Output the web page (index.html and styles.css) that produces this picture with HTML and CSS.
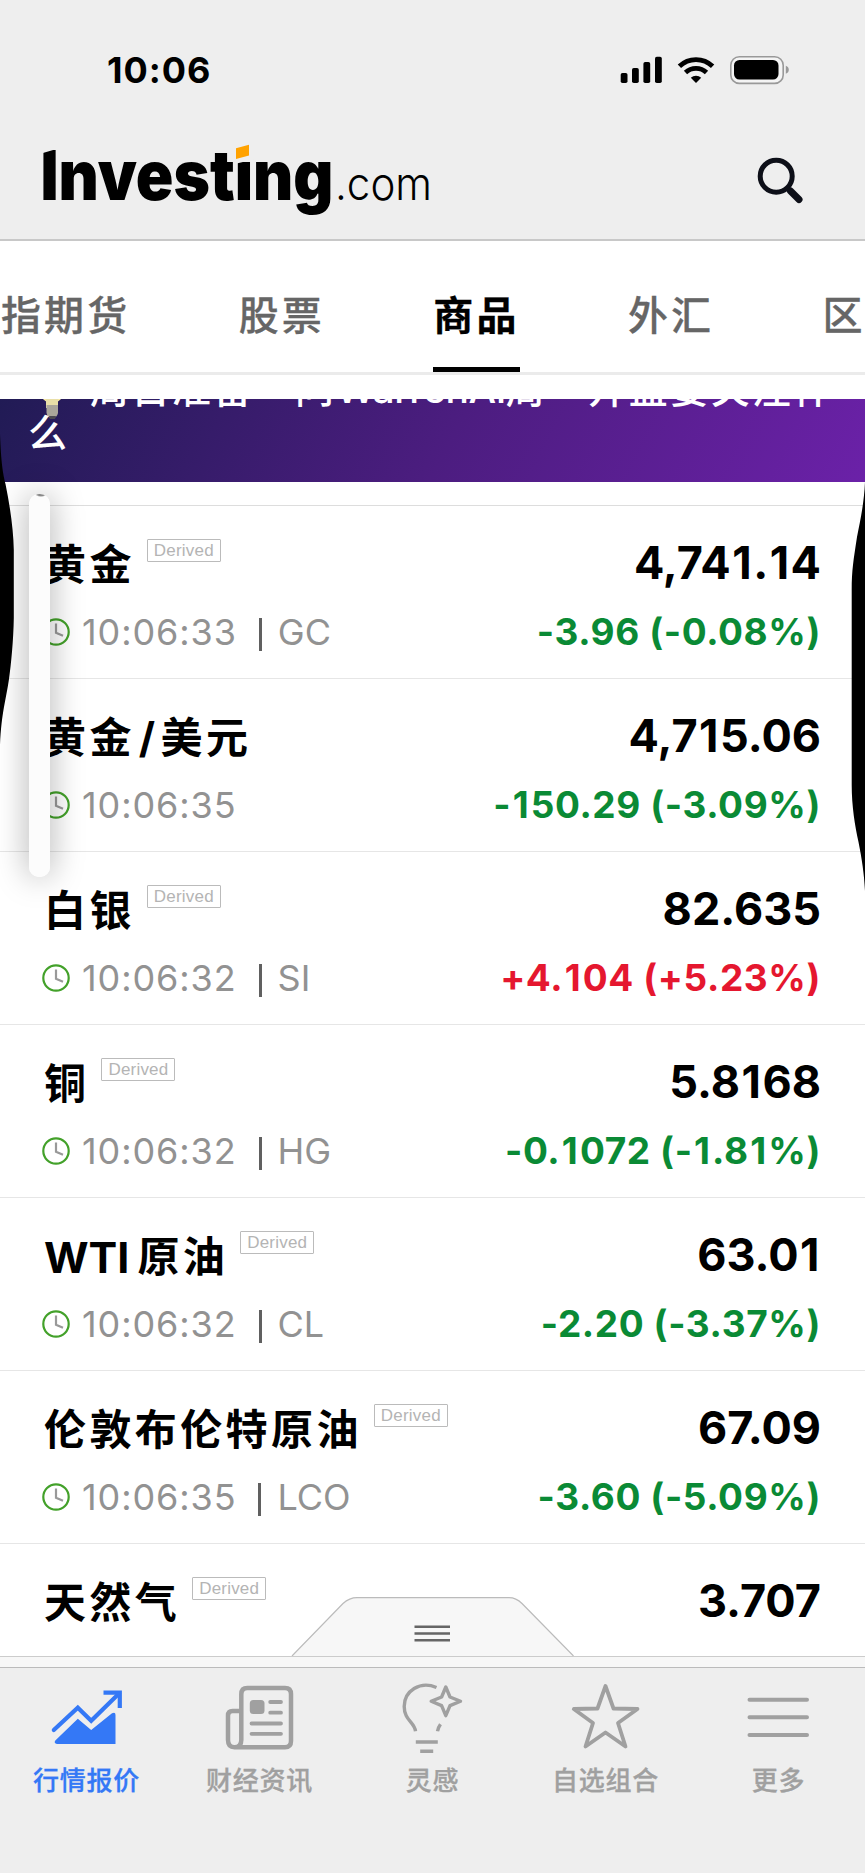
FILE: index.html
```html
<!DOCTYPE html>
<html lang="zh-CN">
<head>
  <meta charset="UTF-8">
  <meta name="viewport" content="width=device-width, initial-scale=1.0">
  <title>Investing.com</title>
  <link rel="stylesheet" href="styles.css">
</head>
<body>
  <div class="app">
    <header class="header">
      <div class="status-bar">
        <span class="status-time">10:06</span>
        <svg class="status-icons" width="170" height="30" viewBox="620 55 170 30">
          <rect x="620.7" y="73" width="6.8" height="10" rx="1.8"/>
          <rect x="632" y="68" width="6.8" height="15" rx="1.8"/>
          <rect x="643.4" y="62" width="6.8" height="21" rx="1.8"/>
          <rect x="655" y="56.7" width="6.8" height="26.3" rx="1.8"/>
          <g fill="none" stroke="#000" stroke-width="4.8">
            <path d="M679.4 66.2a24 24 0 0 1 33.2 0"/>
            <path d="M685.5 72.6a15.4 15.4 0 0 1 21 0"/>
          </g>
          <path d="M696 83l-5.2-5.2a7.6 7.6 0 0 1 10.4 0z"/>
          <rect x="730.8" y="56.8" width="52.4" height="26.6" rx="8.5" fill="#f4f4f4" stroke="#999" stroke-width="1.6"/>
          <rect x="734" y="60" width="44.5" height="19.6" rx="5.5"/>
          <path d="M785.8 65.8v8q3-1.2 3-4t-3-4z" fill="#999"/>
        </svg>
      </div>
      <div class="brand-bar">
        <svg class="logo" width="392" height="74" viewBox="40 140 392 74">
          <text class="logo-name" x="40.5" y="199.7" textLength="293" lengthAdjust="spacingAndGlyphs">Investing</text>
          <text class="logo-com" x="335" y="199.7" textLength="97" lengthAdjust="spacingAndGlyphs">.com</text>
          <path class="logo-cut" d="M40 138h20v10l-18 5.2h-2z"/>
          <path class="logo-cut" d="M234.500 138h19v21.500l-19 4.500z"/>
          <path class="logo-dot" d="M236 148.3l13-3.6v10.8l-13 3.4z"/>
        </svg>
        <svg class="search" width="48" height="52" viewBox="755 155 48 52">
          <circle cx="776.2" cy="176.2" r="16"/>
          <path class="search-neck" d="M786.5 187.5l3 3"/>
          <path class="search-handle" d="M790.5 191l8.5 8.5"/>
        </svg>
      </div>
    </header>

    <nav class="tabs">
      <a class="tab">指期货</a>
      <a class="tab">股票</a>
      <a class="tab active">商品</a>
      <a class="tab">外汇</a>
      <a class="tab">区</a>
    </nav>

    <main class="content">
      <div class="banner">
        <p class="banner-text"><svg class="bulb" width="50" height="40" viewBox="0 0 50 40"><circle cx="24" cy="12" r="12" fill="#f6e7a0"/><path d="M18 20h12v9H18z" fill="#e9dfa8"/><path d="M18.500 26h11.500v8q-1 5-5.700 5t-5.800-5z" fill="#aaa69b"/><path d="M21 37h7l-1 3h-5z" fill="#4c4a52"/></svg><span class="gap"></span>周日准备—问<span class="warren">WarrenAI</span>周一开盘要关注什<br>么</p>
      </div>

      <ul class="quotes">
        <li class="quote">
          <div class="name">黄金<span class="tag">Derived</span></div>
          <div class="price">4,74<i>1</i>.<i>1</i>4</div>
          <div class="meta"><svg class="clock" viewBox="0 0 28 28"><circle cx="14" cy="14" r="12.700"/><path d="M14 5.500v9.200l7 3"/></svg><span class="time">10:06:33</span><b class="sep"></b><span>GC</span></div>
          <div class="change down">-3.96 (-0.08%)</div>
        </li>
        <li class="quote">
          <div class="name">黄金<span class="slash">/</span>美元</div>
          <div class="price">4,7<i>1</i>5.06</div>
          <div class="meta"><svg class="clock" viewBox="0 0 28 28"><circle cx="14" cy="14" r="12.700"/><path d="M14 5.500v9.200l7 3"/></svg><span class="time">10:06:35</span></div>
          <div class="change down">-<i>1</i>50.29 (-3.09%)</div>
        </li>
        <li class="quote">
          <div class="name">白银<span class="tag">Derived</span></div>
          <div class="price">82.635</div>
          <div class="meta"><svg class="clock" viewBox="0 0 28 28"><circle cx="14" cy="14" r="12.700"/><path d="M14 5.500v9.200l7 3"/></svg><span class="time">10:06:32</span><b class="sep"></b><span>SI</span></div>
          <div class="change up">+4.<i>1</i>04 (+5.23%)</div>
        </li>
        <li class="quote">
          <div class="name">铜<span class="tag">Derived</span></div>
          <div class="price">5.8<i>1</i>68</div>
          <div class="meta"><svg class="clock" viewBox="0 0 28 28"><circle cx="14" cy="14" r="12.700"/><path d="M14 5.500v9.200l7 3"/></svg><span class="time">10:06:32</span><b class="sep"></b><span>HG</span></div>
          <div class="change down">-0.<i>1</i>072 (-<i>1</i>.8<i>1</i>%)</div>
        </li>
        <li class="quote">
          <div class="name"><span class="latin">WTI</span>原油<span class="tag">Derived</span></div>
          <div class="price">63.0<i>1</i></div>
          <div class="meta"><svg class="clock" viewBox="0 0 28 28"><circle cx="14" cy="14" r="12.700"/><path d="M14 5.500v9.200l7 3"/></svg><span class="time">10:06:32</span><b class="sep"></b><span>CL</span></div>
          <div class="change down">-2.20 (-3.37%)</div>
        </li>
        <li class="quote">
          <div class="name">伦敦布伦特原油<span class="tag">Derived</span></div>
          <div class="price">67.09</div>
          <div class="meta"><svg class="clock" viewBox="0 0 28 28"><circle cx="14" cy="14" r="12.700"/><path d="M14 5.500v9.200l7 3"/></svg><span class="time">10:06:35</span><b class="sep"></b><span>LCO</span></div>
          <div class="change down">-3.60 (-5.09%)</div>
        </li>
        <li class="quote">
          <div class="name">天然气<span class="tag">Derived</span></div>
          <div class="price">3.707</div>
        </li>
      </ul>

      <!-- pull-up drawer handle -->
      <svg class="drawer-handle" width="285" height="60" viewBox="290 1596 285 60">
        <path d="M292 1656L343 1603.500Q349.500 1597.700 357 1597.700H509Q516 1597.700 522 1603.500L573.500 1656"/>
        <path class="grip" d="M414.500 1626.800H450M414.500 1633.500H450M414.500 1640.200H450"/>
      </svg>
    </main>

    <div class="drawer-edge"></div>

    <nav class="bottom-nav">
      <a class="nav-item active">
        <svg width="80" height="80" viewBox="0 0 80 80">
          <path d="M6.800 55L30.800 32.700L44.200 45.700L72 18.500" fill="none" stroke="currentColor" stroke-width="4.200" stroke-linecap="round"/>
          <path d="M56.500 17.700H72.800V33" fill="none" stroke="currentColor" stroke-width="4.200"/>
          <path d="M8.300 65.500L30.800 43.700L44.200 55L65 38.200Q68.500 36.500 68.500 40V69H10Q6.500 68 8.300 65.500z" fill="currentColor"/>
        </svg>
        <span>行情报价</span>
      </a>
      <a class="nav-item">
        <svg width="80" height="80" viewBox="0 0 80 80" fill="none" stroke="currentColor" stroke-width="4.500">
          <path d="M14.500 72.200H65Q71 72.200 71 66V19.200Q71 13 65 13H27.300Q21.300 13 21.300 19.200V65Q21.300 72.200 14.500 72.200Q8 72.200 8 65V40.500Q8 36 12.500 36H21"/>
          <rect x="29.800" y="25" width="14.700" height="14" rx="3.500" fill="currentColor" stroke="none"/>
          <path d="M50.200 27H61M50.200 37.700H61M31.500 48.500H61M31.500 58.800H61" stroke-width="3.800" stroke-linecap="round"/>
        </svg>
        <span>财经资讯</span>
      </a>
      <a class="nav-item">
        <svg width="80" height="80" viewBox="0 0 80 80" fill="none" stroke="currentColor" stroke-width="3.400">
          <path d="M43.500 12.500C27 5.500 11.200 16 11.200 31.500C11.200 45.500 21.500 47 22.500 56.300M47.500 49.300Q45.200 52.500 44.500 56.300M22.800 67H44.800M27.200 76.300H40.200"/>
          <path d="M52.800 12L57 22L67.500 26.300L57 30.600L52.800 40.700L48.600 30.600L38.200 26.300L48.600 22z" stroke-linejoin="round"/>
        </svg>
        <span>灵感</span>
      </a>
      <a class="nav-item">
        <svg width="80" height="80" viewBox="0 0 80 80" fill="none" stroke="currentColor" stroke-width="3.800" stroke-linejoin="round">
          <path d="M39.500 11L47.500 33.500L71.500 34L52 48L59.500 71.500L39.500 57.500L19.500 71.500L27 48L7.800 34L31.500 33.500z"/>
        </svg>
        <span>自选组合</span>
      </a>
      <a class="nav-item">
        <svg width="80" height="80" viewBox="0 0 80 80" fill="none" stroke="currentColor" stroke-width="4" stroke-linecap="round">
          <path d="M10.500 24.700H68M10.500 42.300H68M10.500 60H68"/>
        </svg>
        <span>更多</span>
      </a>
    </nav>

    <!-- edge bulges and side pill lie over the page -->
    <svg class="edge edge-left" width="15" height="320" viewBox="0 430 15 320">
      <path d="M0 434C1 462 3 474 5.500 484C10 506 13.500 530 13.800 550V618C13.500 640 11 665 9 679C6 700 1.500 712 0 745z"/>
    </svg>
    <svg class="edge edge-right" width="15" height="415" viewBox="850 480 15 415">
      <path d="M865 482C864 504 860 522 857 537C853.500 560 851.700 570 851.700 590V785C851.700 806 855 826 858.500 842C862 860 864 872 865 891z"/>
    </svg>
    <div class="side-pill"></div>
  </div>
</body>
</html>
```
FILE: styles.css
```css
* {
  box-sizing: border-box;
}

body {
  margin: 0;
  background-color: #fff;
  font-family: Inter, "Noto Sans CJK SC", sans-serif;
  color: #000;
}

.app {
  position: relative;
  width: 865px;
  height: 1873px;
  overflow: hidden;
  display: flex;
  flex-direction: column;
}

/* header */
.header {
  height: 241px;
  background-color: #eee;
  border-bottom: 2px solid #c8c8c8;
  padding: 55px 0 0;
}

.status-bar {
  display: flex;
  justify-content: space-between;
  align-items: center;
  height: 30px;
  padding: 0 75px 0 107px;
}

.status-time {
  font-size: 36px;
  font-weight: 700;
  line-height: 30px;
  letter-spacing: 1px;
}

.brand-bar {
  display: flex;
  justify-content: space-between;
  margin-top: 55px;
  padding: 0 62px 0 40px;
}

.logo {
  overflow: visible;
}

.logo-name {
  font-size: 69px;
  font-weight: 900;
}

.logo-com {
  font-size: 46px;
  font-weight: 300;
}

.logo-cut {
  fill: #eee;
}

.logo-dot {
  fill: #ffa200;
}

.search {
  margin-top: 15px;
  fill: none;
  stroke: #0d0f18;
  stroke-width: 5;
}

.search-handle {
  stroke-width: 7;
  stroke-linecap: round;
}

/* category tabs */
.tabs {
  display: flex;
  flex: none;
  gap: 108.400px;
  height: 134px;
  padding: 1px 0 0 1px;
  border-bottom: 3px solid #ebebeb;
  white-space: nowrap;
  overflow: hidden;
}

.tab {
  flex: none;
  height: 130px;
  padding-top: 41px;
  font-family: "Noto Sans CJK SC", sans-serif;
  font-size: 40px;
  font-weight: 500;
  line-height: 60px;
  letter-spacing: 3.100px;
  color: #666;
  -webkit-text-stroke: 0.300px currentColor;
}

.tab.active {
  font-weight: 700;
  color: #000;
  border-bottom: 5px solid #000;
}

/* scrolling area */
.content {
  position: relative;
  flex: none;
  height: 1281px;
  padding-top: 24px;
  overflow: hidden;
}

.banner {
  display: flex;
  align-items: flex-end;
  height: 83px;
  padding: 0 28px 33px;
  background: linear-gradient(118deg, #211b55 0%, #4c1d80 52%, #6b21a8 100%);
  overflow: hidden;
}

.banner-text {
  margin: 0;
  font-family: "Noto Sans CJK SC", sans-serif;
  font-size: 39px;
  line-height: 38px;
  letter-spacing: 2px;
  font-weight: 500;
  color: #fff;
  white-space: nowrap;
}

.bulb {
  margin: -10px 0 -8px;
  vertical-align: -8px;
}

.gap {
  display: inline-block;
  width: 12px;
}

.warren {
  font-family: Inter, sans-serif;
  letter-spacing: -0.500px;
}

.quotes {
  list-style: none;
  margin: 23px 0 0;
  padding: 0;
  border-top: 1px solid #ddd;
}

.quote {
  display: grid;
  grid-template-columns: 1fr auto;
  grid-template-rows: 60px 48px;
  row-gap: 14px;
  height: 173px;
  padding: 28px 44px 0 42px;
  border-bottom: 1px solid #e6e6e6;
}

.name {
  display: flex;
  font-size: 42px;
  font-weight: 700;
  line-height: 62px;
  letter-spacing: 3.400px;
  padding-left: 2px;
  white-space: nowrap;
}

.slash {
  padding: 0 2px 0 4px;
}

.latin {
  font-size: 43px;
  letter-spacing: 0;
  margin-right: 8px;
}

.tag {
  height: 23px;
  margin: 5px 0 0 12px;
  padding: 0 6px;
  border: 1px solid #bbb;
  border-radius: 1px;
  font-family: "Liberation Sans", Arial, sans-serif;
  font-size: 17px;
  font-weight: 400;
  line-height: 21px;
  letter-spacing: 0.200px;
  color: #b4b4b4;
}

.price {
  font-size: 45px;
  font-weight: 700;
  line-height: 57px;
  text-align: right;
}

/* the digit 1 gets a little more room in figures */
.price i,
.change i {
  font-style: normal;
  margin: 0 1.500px;
}

.meta {
  display: flex;
  align-items: center;
  font-size: 36px;
  line-height: 48px;
  color: #929292;
}

.clock {
  width: 28px;
  height: 28px;
  margin-right: 12px;
  fill: none;
}

.clock circle {
  stroke: #43a12a;
  stroke-width: 2.200;
}

.clock path {
  stroke: #999;
  stroke-width: 2.200;
}

.time {
  letter-spacing: 0.900px;
}

.sep {
  width: 3px;
  height: 33px;
  margin: 4px 16px 0 22px;
  background-color: #606060;
}

.change {
  font-size: 37px;
  font-weight: 700;
  line-height: 48px;
  letter-spacing: 0.600px;
  text-align: right;
}

.down {
  color: #0a8a35;
}

.up {
  color: #e5172f;
}

.drawer-handle {
  position: absolute;
  left: 290px;
  bottom: 0;
  fill: #f7f7f7;
  stroke: #bbb;
  stroke-width: 1.200;
}

.grip {
  stroke: #666;
  stroke-width: 2.600;
}

.drawer-edge {
  height: 11px;
  flex: none;
  background: linear-gradient(#f7f7f7, #f7f7f7) 292px 0 / 281px 1px no-repeat, #f7f7f7;
  border-top: 1px solid #ccc;
}

/* bottom navigation */
.bottom-nav {
  display: grid;
  grid-template-columns: repeat(5, 173px);
  height: 206px;
  flex: none;
  padding-top: 7px;
  background-color: #eee;
  border-top: 1px solid #bbb;
}

.nav-item {
  display: flex;
  flex-direction: column;
  align-items: center;
  color: #a0a0a0;
  font-family: "Noto Sans CJK SC", sans-serif;
  font-size: 26px;
  font-weight: 500;
  line-height: 40px;
  letter-spacing: 0.700px;
  -webkit-text-stroke: 0.300px currentColor;
}

.nav-item span {
  margin-top: 4px;
}

.nav-item.active {
  color: #3478f6;
}

/* overlays */
.edge {
  position: absolute;
}

.edge-left {
  left: 0;
  top: 430px;
}

.edge-right {
  right: 0;
  top: 480px;
}

.side-pill {
  position: absolute;
  left: 29px;
  top: 494px;
  width: 20.500px;
  height: 383px;
  border-radius: 10px;
  background: radial-gradient(6px 3px at 12px 0, #888 60%, #fcfcfc);
  box-shadow: 0 0 32px rgba(0, 0, 0, 0.35);
}
```
